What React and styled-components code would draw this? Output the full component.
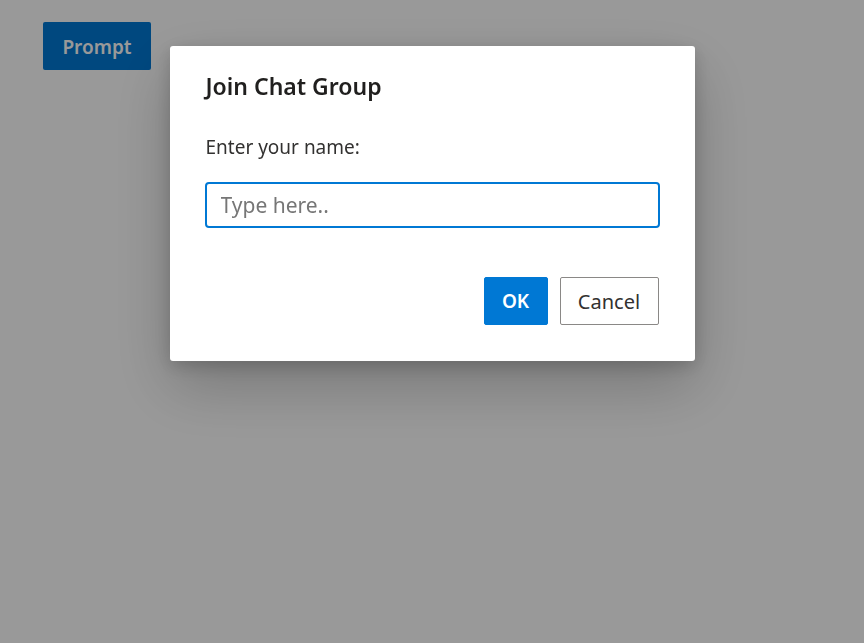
import React from "react";
import styled, { createGlobalStyle } from "styled-components";

const GlobalStyle = createGlobalStyle`
  html, body {
    margin: 0;
    padding: 0;
    background: #ffffff;
    font-family: "Noto Sans", "Open Sans", sans-serif;
  }
`;

const Page = styled.div`
  width: 864px;
  height: 643px;
  padding: 22px 0 0 43px;
  box-sizing: border-box;
`;

const PromptButton = styled.button`
  width: 108px;
  height: 48px;
  border: none;
  border-radius: 2px;
  background: #0078d4;
  color: #ffffff;
  font-family: inherit;
  font-size: 19px;
  font-weight: 600;
  padding-top: 3px;
`;

const Overlay = styled.div`
  position: fixed;
  inset: 0;
  background: rgba(0, 0, 0, 0.4);
  display: flex;
  justify-content: center;
  align-items: flex-start;
  padding-top: 46px;
`;

const Dialog = styled.div`
  width: 525px;
  box-sizing: border-box;
  background: #ffffff;
  border-radius: 3px;
  box-shadow: 0 25px 60px rgba(0, 0, 0, 0.22), 0 5px 18px rgba(0, 0, 0, 0.18);
  padding: 24px 35px 36px 35px;
  display: flex;
  flex-direction: column;
  color: #201f1e;
`;

const Title = styled.h2`
  margin: 0 0 0 1px;
  font-size: 23px;
  font-weight: 600;
  line-height: 32px;
`;

const Label = styled.label`
  margin: 32px 0 0 1px;
  font-size: 19px;
  line-height: 26px;
  color: #323130;
`;

const NameInput = styled.input`
  margin-top: 22px;
  height: 46px;
  box-sizing: border-box;
  border: 2px solid #0078d4;
  border-radius: 4px;
  padding: 0 14px;
  font-family: inherit;
  font-size: 21px;
  color: #323130;
  outline: none;
  &::placeholder {
    color: #767676;
  }
`;

const Footer = styled.div`
  margin-top: 49px;
  padding-right: 1px;
  display: flex;
  justify-content: flex-end;
  gap: 12px;
`;

const ActionButton = styled.button`
  height: 48px;
  padding: 0;
  width: ${(p) => (p.$primary ? "64px" : "99px")};
  box-sizing: border-box;
  border-radius: 2px;
  font-family: inherit;
  font-size: ${(p) => (p.$primary ? "19px" : "20px")};
  font-weight: ${(p) => (p.$primary ? 600 : 400)};
  border: 1px solid ${(p) => (p.$primary ? "#0078d4" : "#8a8886")};
  background: ${(p) => (p.$primary ? "#0078d4" : "#ffffff")};
  color: ${(p) => (p.$primary ? "#ffffff" : "#323130")};
`;

export default function App() {
  return (
    <>
      <GlobalStyle />
      <Page>
        <PromptButton>Prompt</PromptButton>
      </Page>
      <Overlay>
        <Dialog>
          <Title>Join Chat Group</Title>
          <Label htmlFor="name">Enter your name:</Label>
          <NameInput id="name" placeholder="Type here.." />
          <Footer>
            <ActionButton $primary>OK</ActionButton>
            <ActionButton>Cancel</ActionButton>
          </Footer>
        </Dialog>
      </Overlay>
    </>
  );
}
